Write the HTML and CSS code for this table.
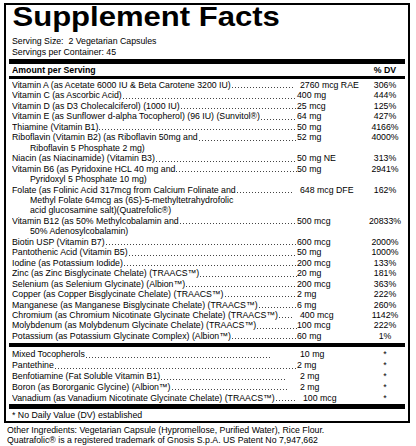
FILE: index.html
```html
<!DOCTYPE html>
<html>
<head>
<meta charset="utf-8">
<link rel="stylesheet" href="styles.css">
</head>
<body>
<div class="label">
  <div class="title">Supplement Facts</div>
  <div class="serving first">Serving Size:&nbsp; 2 Vegetarian Capsules</div>
  <div class="serving">Servings per Container: 45</div>
  <div class="bar thick top"></div>
  <div class="row head"><span class="name">Amount per Serving</span><span class="amt"></span><span class="dv">% DV</span></div>
  <div class="bar thin"></div>
  <div class="list">
    <div class="row"><span class="name"><span class="nm">Vitamin A (as Acetate 6000 IU &amp; Beta Carotene 3200 IU) </span><span class="lead stop3"></span></span><span class="amt sp">2760 mcg RAE</span><span class="dv">306%</span></div>
    <div class="row"><span class="name"><span class="nm">Vitamin C (as Ascorbic Acid)</span><span class="lead"></span></span><span class="amt">400 mg</span><span class="dv">444%</span></div>
    <div class="row"><span class="name"><span class="nm">Vitamin D (as D3 Cholecalciferol) (1000 IU)</span><span class="lead"></span></span><span class="amt">25 mcg</span><span class="dv">125%</span></div>
    <div class="row"><span class="name"><span class="nm">Vitamin E (as Sunflower d-alpha Tocopherol) (96 IU) (Sunvitol®)</span><span class="lead"></span></span><span class="amt">64 mg</span><span class="dv">427%</span></div>
    <div class="row"><span class="name"><span class="nm">Thiamine (Vitamin B1)</span><span class="lead"></span></span><span class="amt">50 mg</span><span class="dv">4166%</span></div>
    <div class="row"><span class="name"><span class="nm">Riboflavin (Vitamin B2) (as Riboflavin 50mg and</span><span class="lead"></span></span><span class="amt">52 mg</span><span class="dv">4000%</span></div>
    <div class="row"><span class="name cont">Riboflavin 5 Phosphate 2 mg)</span></div>
    <div class="row"><span class="name"><span class="nm">Niacin (as Niacinamide) (Vitamin B3) </span><span class="lead"></span></span><span class="amt">50 mg NE</span><span class="dv">313%</span></div>
    <div class="row"><span class="name"><span class="nm">Vitamin B6 (as Pyridoxine HCL 40 mg and</span><span class="lead"></span></span><span class="amt">50 mg</span><span class="dv">2941%</span></div>
    <div class="row"><span class="name cont">Pyridoxyl 5 Phosphate 10 mg)</span></div>
    <div class="row"><span class="name"><span class="nm">Folate (as Folinic Acid 317mcg from Calcium Folinate and </span><span class="lead stop3"></span></span><span class="amt sp">648 mcg DFE</span><span class="dv">162%</span></div>
    <div class="row"><span class="name cont">Methyl Folate 64mcg as (6S)-5-methyltetrahydrofolic</span></div>
    <div class="row"><span class="name cont">acid glucosamine salt)(Quatrefolic®)</span></div>
    <div class="row"><span class="name"><span class="nm">Vitamin B12 (as 50% Methylcobalamin and </span><span class="lead"></span></span><span class="amt">500 mcg</span><span class="dv">20833%</span></div>
    <div class="row"><span class="name cont">50% Adenosylcobalamin)</span></div>
    <div class="row"><span class="name"><span class="nm">Biotin USP (Vitamin B7)</span><span class="lead"></span></span><span class="amt">600 mcg</span><span class="dv">2000%</span></div>
    <div class="row"><span class="name"><span class="nm">Pantothenic Acid (Vitamin B5)</span><span class="lead"></span></span><span class="amt">50 mg</span><span class="dv">1000%</span></div>
    <div class="row"><span class="name"><span class="nm">Iodine (as Potassium Iodide) </span><span class="lead"></span></span><span class="amt">200 mcg</span><span class="dv">133%</span></div>
    <div class="row"><span class="name"><span class="nm">Zinc (as Zinc Bisglycinate Chelate) (TRAACS™)</span><span class="lead"></span></span><span class="amt">20 mg</span><span class="dv">181%</span></div>
    <div class="row"><span class="name"><span class="nm">Selenium (as Selenium Glycinate) (Albion™)</span><span class="lead"></span></span><span class="amt">200 mcg</span><span class="dv">363%</span></div>
    <div class="row"><span class="name"><span class="nm">Copper (as Copper Bisglycinate Chelate) (TRAACS™)</span><span class="lead"></span></span><span class="amt">2 mg</span><span class="dv">222%</span></div>
    <div class="row"><span class="name"><span class="nm">Manganese (as Manganese Bisglycinate Chelate) (TRAACS™)</span><span class="lead"></span></span><span class="amt">6 mg</span><span class="dv">260%</span></div>
    <div class="row"><span class="name"><span class="nm">Chromium (as Chromium Nicotinate Glycinate Chelate) (TRAACS™)</span><span class="lead stop3"></span></span><span class="amt sp">400 mcg</span><span class="dv">1142%</span></div>
    <div class="row"><span class="name"><span class="nm">Molybdenum (as Molybdenum Glycinate Chelate) (TRAACS™)</span><span class="lead"></span></span><span class="amt">100 mcg</span><span class="dv">222%</span></div>
    <div class="row"><span class="name"><span class="nm">Potassium (as Potassium Glycinate Complex) (Albion™)</span><span class="lead"></span></span><span class="amt">60 mg</span><span class="dv">1%</span></div>
  </div>
  <div class="bar mid"></div>
  <div class="list second">
    <div class="row"><span class="name"><span class="nm">Mixed Tocopherols</span><span class="lead stop25"></span></span><span class="amt sp">10 mg</span><span class="dv">*</span></div>
    <div class="row"><span class="name"><span class="nm">Pantethine</span><span class="lead"></span></span><span class="amt">2 mg</span><span class="dv">*</span></div>
    <div class="row"><span class="name"><span class="nm">Benfotiamine (Fat Soluble Vitamin B1)</span><span class="lead stop10"></span></span><span class="amt sp">2 mg</span><span class="dv">*</span></div>
    <div class="row"><span class="name"><span class="nm">Boron (as Bororganic Glycine) (Albion™)</span><span class="lead stop10"></span></span><span class="amt sp">2 mg</span><span class="dv">*</span></div>
    <div class="row"><span class="name"><span class="nm">Vanadium (as Vanadium Nicotinate Glycinate Chelate) (TRAACS™)</span><span class="lead"></span></span><span class="amt sp6">100 mcg</span><span class="dv">*</span></div>
  </div>
  <div class="bar end"></div>
  <div class="note">* No Daily Value (DV) established</div>
</div>
<div class="other">
  <div>Other Ingredients: Vegetarian Capsule (Hypromellose, Purified Water), Rice Flour.</div>
  <div>Quatrafolic® is a registered trademark of Gnosis S.p.A. US Patent No 7,947,662</div>
</div>
</body>
</html>
```
FILE: styles.css
```css
html, body {
  margin: 0;
  padding: 0;
  background: #fff;
}
body {
  font-family: "Liberation Sans", Arial, sans-serif;
  font-size: 8.75px;
  color: #000;
}
.label {
  margin: 3px 0 0 4px;
  width: 396px;
  border: 2px solid #000;
  padding: 0 3px 0.5px;
}
.title {
  width: max-content;
  font-weight: bold;
  font-size: 27px;
  line-height: 25px;
  padding-left: 3px;
  white-space: nowrap;
  transform: scaleX(1.15);
  transform-origin: left center;
}
.serving {
  padding-left: 3px;
  line-height: 10.5px;
}
.serving.first {
  margin-top: 6px;
}
.bar {
  background: #000;
}
.bar.top {
  margin-top: 2px;
  height: 5px;
}
.bar.thin {
  margin-top: 0.5px;
  height: 3px;
}
.bar.mid {
  margin-top: 1.5px;
  height: 4.5px;
}
.bar.end {
  margin-top: 1px;
  height: 4.5px;
}
.list {
  margin-top: 1px;
}
.list.second {
  margin-top: 2px;
}
.row {
  display: grid;
  grid-template-columns: 285px 68px 40px;
  line-height: 10.46px;
  padding-left: 3px;
  white-space: nowrap;
}
.second .row {
  line-height: 10.8px;
}
.row.head {
  font-weight: bold;
  margin-top: 1px;
  line-height: 10.5px;
}
.name {
  display: flex;
  overflow: hidden;
  min-width: 0;
}
.nm {
  flex: none;
}
.lead {
  flex: 1 1 0;
  min-width: 0;
  background-image: linear-gradient(90deg, #444 0, #444 1px, rgba(0, 0, 0, 0) 1px);
  background-size: 3px 1px;
  background-repeat: repeat-x;
  background-position: 1px 7.4px;
}
.second .lead {
  background-position: 1px 7.6px;
}
.lead.stop3 {
  margin-right: 3px;
}
.lead.stop10 {
  margin-right: 10px;
}
.lead.stop25 {
  margin-right: 25px;
}
.amt.sp {
  padding-left: 3px;
}
.amt.sp6 {
  padding-left: 6px;
}
.name.cont {
  padding-left: 18px;
}
.dv {
  text-align: center;
}
.note {
  padding-left: 3px;
  line-height: 10.5px;
  margin-top: 1px;
}
.other {
  margin: 2px 0 0 7px;
  line-height: 10.5px;
  white-space: nowrap;
}
```
